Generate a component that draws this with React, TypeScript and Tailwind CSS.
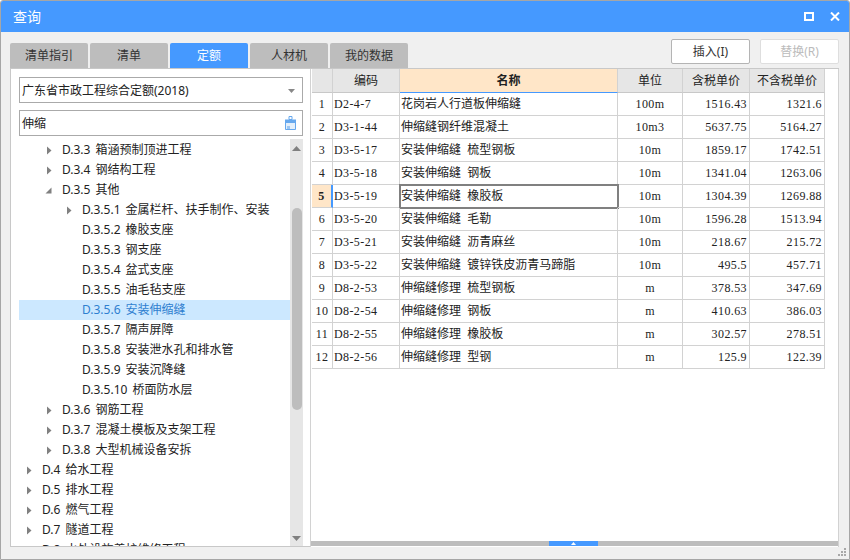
import React from 'react';

const tabs = ['清单指引', '清单', '定额', '人材机', '我的数据'];

type TreeRow = { depth: number; code: string; name: string; arrow?: 'right' | 'down'; selected?: boolean };

const tree: TreeRow[] = [
  { depth: 1, code: 'D.3.3', name: '箱涵预制顶进工程', arrow: 'right' },
  { depth: 1, code: 'D.3.4', name: '钢结构工程', arrow: 'right' },
  { depth: 1, code: 'D.3.5', name: '其他', arrow: 'down' },
  { depth: 2, code: 'D.3.5.1', name: '金属栏杆、扶手制作、安装', arrow: 'right' },
  { depth: 2, code: 'D.3.5.2', name: '橡胶支座' },
  { depth: 2, code: 'D.3.5.3', name: '钢支座' },
  { depth: 2, code: 'D.3.5.4', name: '盆式支座' },
  { depth: 2, code: 'D.3.5.5', name: '油毛毡支座' },
  { depth: 2, code: 'D.3.5.6', name: '安装伸缩缝', selected: true },
  { depth: 2, code: 'D.3.5.7', name: '隔声屏障' },
  { depth: 2, code: 'D.3.5.8', name: '安装泄水孔和排水管' },
  { depth: 2, code: 'D.3.5.9', name: '安装沉降缝' },
  { depth: 2, code: 'D.3.5.10', name: '桥面防水层' },
  { depth: 1, code: 'D.3.6', name: '钢筋工程', arrow: 'right' },
  { depth: 1, code: 'D.3.7', name: '混凝土模板及支架工程', arrow: 'right' },
  { depth: 1, code: 'D.3.8', name: '大型机械设备安拆', arrow: 'right' },
  { depth: 0, code: 'D.4', name: '给水工程', arrow: 'right' },
  { depth: 0, code: 'D.5', name: '排水工程', arrow: 'right' },
  { depth: 0, code: 'D.6', name: '燃气工程', arrow: 'right' },
  { depth: 0, code: 'D.7', name: '隧道工程', arrow: 'right' },
  { depth: 0, code: 'D.8', name: '水处设施养护维修工程', arrow: 'right' },
];

const rows = [
  ['D2-4-7', '花岗岩人行道板伸缩缝', '100m', '1516.43', '1321.6'],
  ['D3-1-44', '伸缩缝钢纤维混凝土', '10m3', '5637.75', '5164.27'],
  ['D3-5-17', '安装伸缩缝 梳型钢板', '10m', '1859.17', '1742.51'],
  ['D3-5-18', '安装伸缩缝 钢板', '10m', '1341.04', '1263.06'],
  ['D3-5-19', '安装伸缩缝 橡胶板', '10m', '1304.39', '1269.88'],
  ['D3-5-20', '安装伸缩缝 毛勒', '10m', '1596.28', '1513.94'],
  ['D3-5-21', '安装伸缩缝 沥青麻丝', '10m', '218.67', '215.72'],
  ['D3-5-22', '安装伸缩缝 镀锌铁皮沥青马蹄脂', '10m', '495.5', '457.71'],
  ['D8-2-53', '伸缩缝修理 梳型钢板', 'm', '378.53', '347.69'],
  ['D8-2-54', '伸缩缝修理 钢板', 'm', '410.63', '386.03'],
  ['D8-2-55', '伸缩缝修理 橡胶板', 'm', '302.57', '278.51'],
  ['D8-2-56', '伸缩缝修理 型钢', 'm', '125.9', '122.39'],
];

const mono = "font-['Liberation_Serif','Noto_Sans_CJK_SC',serif] text-[12px] tracking-[0.4px]";
const cell = 'border-r border-b border-[#d2d2d2] flex items-center';
const head = `${cell} h-[24px] pt-[1px] justify-center`;

const Arrow = ({ dir }: { dir: 'right' | 'down' }) =>
  dir === 'right' ? (
    <svg width="6" height="9" viewBox="0 0 6 9" className="shrink-0 -ml-[1px]"><path d="M1 0.5 L5.5 4.5 L1 8.5 Z" fill="#808080" /></svg>
  ) : (
    <svg width="7" height="7" viewBox="0 0 7 7" className="shrink-0 -ml-[2px]"><path d="M6.5 0.5 V6.5 H0.5 Z" fill="#808080" /></svg>
  );

const TreeItem = ({ row }: { row: TreeRow }) => {
  const pad = ['pl-[8px]', 'pl-[28px]', 'pl-[48px]'][row.depth];
  return (
    <div className={`h-[20px] shrink-0 flex items-center whitespace-nowrap ${pad} ${row.selected ? 'bg-[#cce8ff] text-[#2f7fd0]' : 'text-[#222]'}`}>
      <span className="w-[15px] shrink-0 flex items-center">{row.arrow && <Arrow dir={row.arrow} />}</span>
      <span className="mr-[5px]">{row.code}</span>
      <span>{row.name}</span>
    </div>
  );
};

export default function App() {
  return (
    <div className="w-[850px] h-[560px] flex flex-col border border-[#a6a6a6] rounded-t-[3px] overflow-hidden bg-[#f0f0f0] font-['Noto_Sans','Noto_Sans_CJK_SC',sans-serif] text-[12px] text-[#222]">
      <div className="h-[31px] shrink-0 bg-[#4599ff] flex items-center justify-between pl-[12px] pr-[9px] text-white text-[14px]">
        <span>查询</span>
        <div className="flex items-center gap-[16px] -mt-[1px]">
          <div className="w-[10px] h-[9px] border-2 border-white" />
          <svg width="10" height="9" viewBox="0 0 10 9"><path d="M1 0.5 L9 8.5 M9 0.5 L1 8.5" stroke="#fff" strokeWidth="2" /></svg>
        </div>
      </div>

      <div className="flex-1 min-h-0 flex flex-col relative">
        <div className="h-[36px] shrink-0 flex items-end pl-[9px] pr-[9px] justify-between relative">
          <div className="flex gap-[2px]">
            {tabs.map((t, i) => (
              <div key={t} className={`w-[78px] h-[25px] rounded-t-[2px] flex items-center justify-center ${i === 2 ? 'bg-[#4599ff] text-white' : 'bg-[#bdbdbd] text-[#333]'}`}>{t}</div>
            ))}
          </div>
          <div className="flex gap-[10px] mb-[4px] mr-[1px]">
            <div className="w-[79px] h-[25px] bg-white border border-[#b4b4b4] rounded-[2px] flex items-center justify-center text-[#333]">插入(I)</div>
            <div className="w-[79px] h-[25px] bg-white border border-[#dedede] rounded-[2px] flex items-center justify-center text-[#bbb]">替换(R)</div>
          </div>
        </div>

        <div className="h-[479px] shrink-0 ml-[9px] mr-[10px] flex border-t border-[#c8c8c8]">
          <div className="w-[300px] shrink-0 bg-white border-l border-b border-[#c8c8c8] flex flex-col pl-[8px] pr-[7px] pt-[8px]">
            <div className="h-[26px] shrink-0 border border-[#aaa] flex items-center justify-between pl-[2px] pr-[7px] pt-[1px]">
              <span>广东省市政工程综合定额(2018)</span>
              <svg width="7" height="4" viewBox="0 0 7 4"><path d="M0 0 H7 L3.5 4 Z" fill="#888" /></svg>
            </div>
            <div className="h-[26px] shrink-0 mt-[7px] border border-[#aaa] flex items-center justify-between pl-[2px] pr-[5px] pt-[1px]">
              <span>伸缩</span>
              <svg width="13" height="14" viewBox="0 0 13 14" className="-mt-[1px]">
                <path d="M5 0.5 H8 V3.5 H5 Z" fill="none" stroke="#66a8ee" />
                <path d="M1 3.5 H12 V7 H1 Z" fill="#66a8ee" />
                <path d="M1.5 7 V13.5 H11.5 V7" fill="#e3effb" stroke="#66a8ee" />
                <path d="M3 10 H6 V13 H3 Z" fill="#9cc6f2" />
              </svg>
            </div>
            <div className="flex-1 min-h-0 flex mt-[3px]">
              <div className="flex-1 min-w-0 overflow-hidden flex flex-col pt-[1px]">
                {tree.map(r => <TreeItem key={r.code} row={r} />)}
              </div>
              <div className="w-[13px] shrink-0 bg-[#e6e6e6] flex flex-col items-center pt-[7px]">
                <svg width="9" height="5" viewBox="0 0 9 5" className="shrink-0"><path d="M4.5 0 L9 5 H0 Z" fill="#808080" /></svg>
                <div className="w-[10px] h-[202px] mt-[57px] shrink-0 rounded-[5px] bg-[#bdbdbd]" />
                <svg width="9" height="5" viewBox="0 0 9 5" className="shrink-0 mt-[126px]"><path d="M0 0 H9 L4.5 5 Z" fill="#808080" /></svg>
              </div>
            </div>
          </div>

          <div className="flex-1 min-w-0 flex flex-col bg-white border-r border-l border-[#d2d2d2]">
            <div className="flex-1 min-h-0 pl-[1px]">
              <div className="grid grid-cols-[21px_67px_218px_65px_67px_75px] w-[513px]">
                <div className={`${head} bg-[#e6e6e6] border-b-[#c8c8c8]`} />
                <div className={`${head} bg-[#e6e6e6] border-b-[#c8c8c8]`}>编码</div>
                <div className={`${head} bg-[#ffe6c8] font-bold border-b-[#4599ff]`}>名称</div>
                <div className={`${head} bg-[#e6e6e6] border-b-[#c8c8c8]`}>单位</div>
                <div className={`${head} bg-[#e6e6e6] border-b-[#c8c8c8]`}>含税单价</div>
                <div className={`${head} bg-[#e6e6e6] border-b-[#c8c8c8]`}>不含税单价</div>
                {rows.map((r, i) => {
                  const on = i === 4;
                  return (
                    <React.Fragment key={r[0]}>
                      <div className={`${cell} h-[23px] justify-center ${mono} ${on ? 'bg-[#ffe6c8] font-bold border-r-[#4599ff] border-r-2' : ''}`}>{i + 1}</div>
                      <div className={`${cell} h-[23px] pl-[1px] ${mono}`}>{r[0]}</div>
                      <div className={`${cell} h-[23px] pl-[1px] whitespace-pre ${on ? 'outline-2 -outline-offset-1 outline-[#808080]' : ''}`}>{r[1].replace(' ', '  ')}</div>
                      <div className={`${cell} h-[23px] justify-center ${mono}`}>{r[2]}</div>
                      <div className={`${cell} h-[23px] justify-end pr-[2px] ${mono}`}>{r[3]}</div>
                      <div className={`${cell} h-[23px] justify-end pr-[2px] ${mono}`}>{r[4]}</div>
                    </React.Fragment>
                  );
                })}
              </div>
            </div>
            <div className="h-[5px] shrink-0 bg-[#bdbdbd] flex justify-center mb-[1px]">
              <div className="w-[49px] h-[5px] -ml-[2px] bg-[#4599ff] flex items-center justify-center">
                <svg width="5" height="3" viewBox="0 0 5 3"><path d="M2.5 0 L5 3 H0 Z" fill="#fff" /></svg>
              </div>
            </div>
          </div>
        </div>

        <div className="absolute right-[3px] bottom-[3px] grid grid-cols-3 gap-[1px]">
          {[0, 0, 1, 0, 1, 1, 1, 1, 1].map((v, i) => (
            <div key={i} className={`w-[2px] h-[2px] ${v ? 'bg-[#a8a8a8]' : ''}`} />
          ))}
        </div>
      </div>
    </div>
  );
}
